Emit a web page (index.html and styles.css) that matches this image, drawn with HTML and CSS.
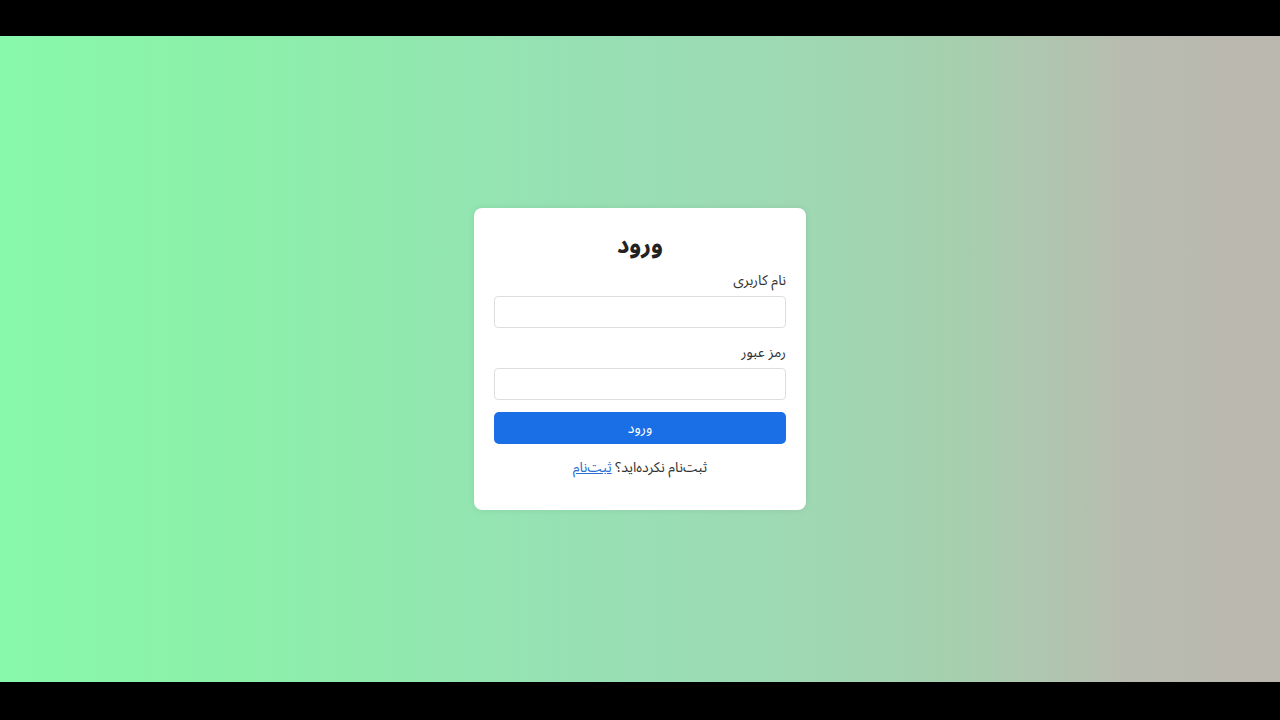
FILE: index.html
```html
<!DOCTYPE html>
<html lang="fa" dir="rtl">
<head>
<meta charset="utf-8">
<title>ورود</title>
<link rel="stylesheet" href="styles.css">
</head>
<body>
<div class="stage">
  <form class="card">
    <h2 class="title">ورود</h2>
    <div class="field">
      <label class="label" for="u">نام کاربری</label>
      <input class="input" id="u" type="text">
    </div>
    <div class="field">
      <label class="label" for="p">رمز عبور</label>
      <input class="input" id="p" type="password">
    </div>
    <button class="btn" type="button">ورود</button>
    <p class="footer">ثبت‌نام نکرده‌اید؟ <a class="link" href="#">ثبت‌نام</a></p>
  </form>
</div>
</body>
</html>
```

FILE: styles.css
```css
html, body {
  margin: 0;
  padding: 0;
  background: #000;
}
body {
  padding-top: 36px;
  height: 720px;
  box-sizing: border-box;
  font-family: "Noto Sans Arabic", "Noto Sans", sans-serif;
}
.stage {
  height: 646px;
  display: flex;
  align-items: center;
  justify-content: center;
  background: linear-gradient(90deg, #88f9aa 0%, #8cefaa 20%, #97e0b4 45%, #9ddab4 60%, #a6cfae 75%, #b8bcb0 88%, #bbb7af 100%);
}
.card {
  width: 332px;
  box-sizing: border-box;
  background: #fff;
  border-radius: 8px;
  padding: 22px 20px 20px;
  display: flex;
  flex-direction: column;
  box-shadow: 0 0 6px rgba(0,0,0,0.08);
}
.title {
  margin: 0 0 10px;
  font-size: 24px;
  line-height: 32px;
  font-weight: bold;
  text-align: center;
  color: #222;
}
.field {
  display: flex;
  flex-direction: column;
  margin-bottom: 16px;
}
.field + .field {
  margin-bottom: 12px;
}
.label {
  font-size: 14px;
  line-height: 18px;
  color: #333;
  margin-bottom: 6px;
  text-align: right;
}
.input {
  height: 32px;
  box-sizing: border-box;
  border: 1px solid #ddd;
  border-radius: 4px;
  padding: 0 8px;
  background: #fff;
  font: inherit;
}
.btn {
  height: 32px;
  border: 0;
  border-radius: 5px;
  background: #1a6fe6;
  color: #fff;
  font-family: inherit;
  font-size: 14px;
}
.footer {
  margin: 14px 0 12px;
  font-size: 14px;
  line-height: 20px;
  text-align: center;
  color: #333;
}
.link {
  color: #2a6fd0;
  text-decoration: underline;
}
```
